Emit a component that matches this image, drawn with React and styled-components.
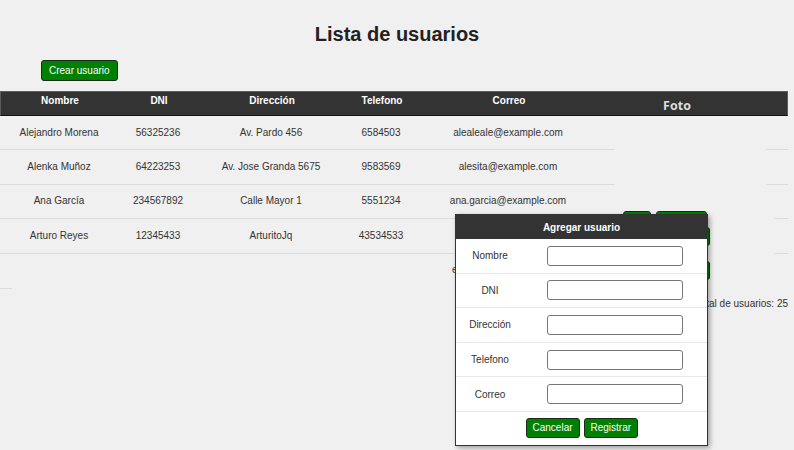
import React from "react";
import styled, { createGlobalStyle } from "styled-components";

const GlobalStyle = createGlobalStyle`
  body {
    margin: 0;
    background: #f0f0f0;
    font-family: "Liberation Sans", Arial, sans-serif;
    color: #333;
  }
`;

const Page = styled.div`
  position: relative;
  width: 794px;
  height: 450px;
  overflow: hidden;
`;

const Title = styled.h1`
  margin: 22px 0 0;
  font-size: 20px;
  line-height: 24px;
  font-weight: bold;
  text-align: center;
  color: #222;
`;

const Toolbar = styled.div`
  display: flex;
  padding: 14px 0 0 41px;
  margin-bottom: 10px;
`;

const GreenButton = styled.button`
  box-sizing: border-box;
  width: ${(p) => (p.$w ? `${p.$w}px` : "auto")};
  height: ${(p) => p.$h || 20}px;
  padding: 0 ${(p) => p.$pad || 6}px;
  background: #008000;
  color: #fff;
  border: 1px solid #1c2a1c;
  border-radius: 3px;
  font-family: "Liberation Sans", Arial, sans-serif;
  font-size: 10px;
  line-height: 12px;
  cursor: pointer;
  flex-shrink: 0;
`;

const Table = styled.div`
  width: 788px;
`;

const HeadRow = styled.div`
  box-sizing: border-box;
  display: grid;
  grid-template-columns: 118px 80px 146px 74px 180px 156px 1fr;
  height: 25px;
  background: #333;
  border: 1px solid #5c5c5c;
  border-bottom-color: #111;
  width: 788px;
`;

const HeadCell = styled.div`
  padding-top: 3px;
  text-align: center;
  color: #fff;
  font-size: 10px;
  line-height: 12px;
  font-weight: bold;
`;

const FotoHead = styled.div`
  padding-top: 6px;
  text-align: center;
  color: #ddd;
  font-family: "Open Sans", "Liberation Sans", sans-serif;
  font-size: 12.5px;
  line-height: 15px;
  font-weight: bold;
`;

const Row = styled.div`
  display: grid;
  grid-template-columns: 118px 80px 146px 74px 180px 17px 1fr ${(p) => p.$tail}px;
  grid-template-rows: 34.4px;
  height: 34.4px;
`;

const Cell = styled.div`
  box-sizing: border-box;
  display: flex;
  align-items: center;
  justify-content: center;
  font-size: 10px;
  line-height: 12px;
  color: #333;
  white-space: nowrap;
  border-bottom: 1px solid ${(p) => (p.$line ? "#dcdcdc" : "transparent")};
`;

const MailCell = styled(Cell)`
  justify-content: flex-start;
  padding-left: ${(p) => p.$indent || 0}px;
`;

const Actions = styled.div`
  box-sizing: border-box;
  display: flex;
  align-items: ${(p) => (p.$drop ? "flex-start" : "center")};
  gap: 5px;
  padding: ${(p) => (p.$drop ? "26px 0 0 8px" : "0 0 0 8px")};
  height: 34.4px;
  min-height: 0;
  overflow: visible;
`;

const Stub = styled.div`
  width: 12px;
  height: 1px;
  background: #dcdcdc;
`;

const Total = styled.div`
  width: 788px;
  margin-top: 9px;
  text-align: right;
  font-size: 10px;
  line-height: 12px;
  color: #333;
`;

const Modal = styled.div`
  position: absolute;
  left: 455px;
  top: 214px;
  width: 253px;
  box-sizing: border-box;
  background: #fff;
  border: 1px solid #333;
  box-shadow: 2px 2px 5px rgba(0, 0, 0, 0.35);
`;

const ModalHead = styled.div`
  height: 24px;
  display: flex;
  align-items: center;
  justify-content: center;
  background: #333;
  color: #fff;
  font-size: 10px;
  font-weight: bold;
`;

const Field = styled.div`
  box-sizing: border-box;
  display: grid;
  grid-template-columns: 68px 1fr;
  align-items: center;
  height: 34.6px;
  border-bottom: 1px solid #e6e6e6;
`;

const Label = styled.label`
  text-align: center;
  font-size: 10px;
  color: #333;
`;

const Input = styled.input`
  justify-self: center;
  box-sizing: border-box;
  width: 136px;
  height: 20px;
  margin-left: -2px;
  border: 1px solid #767676;
  border-radius: 3px;
  background: #fff;
`;

const ModalFooter = styled.div`
  height: 33px;
  display: flex;
  align-items: center;
  justify-content: center;
  gap: 4px;
`;

const users = [
  ["Alejandro Morena", "56325236", "Av. Pardo 456", "6584503", "alealeale@example.com"],
  ["Alenka Muñoz", "64223253", "Av. Jose Granda 5675", "9583569", "alesita@example.com"],
  ["Ana García", "234567892", "Calle Mayor 1", "5551234", "ana.garcia@example.com"],
  ["Arturo Reyes", "12345433", "ArturitoJq", "43534533", "arturo@example.com"],
];

const fields = ["Nombre", "DNI", "Dirección", "Telefono", "Correo"];

function ActionPair({ drop, last }) {
  return (
    <Actions $drop={drop}>
      <GreenButton $w={28} $h={20} $pad={2}>Editar</GreenButton>
      <GreenButton $w={last ? 51 : 54} $h={drop ? 20 : 19}>Eliminar</GreenButton>
    </Actions>
  );
}

export default function App() {
  return (
    <Page>
      <GlobalStyle />
      <Title>Lista de usuarios</Title>
      <Toolbar>
        <GreenButton $h={21} $pad={7}>Crear usuario</GreenButton>
      </Toolbar>

      <Table>
        <HeadRow>
          <HeadCell>Nombre</HeadCell>
          <HeadCell>DNI</HeadCell>
          <HeadCell>Dirección</HeadCell>
          <HeadCell>Telefono</HeadCell>
          <HeadCell>Correo</HeadCell>
          <FotoHead>Foto</FotoHead>
          <div />
        </HeadRow>

        {users.map((u, i) => (
          <Row key={u[0]} $tail={i < 2 ? 22 : 13}>
            {u.map((v) => (
              <Cell key={v} $line>{v}</Cell>
            ))}
            <Cell $line />
            {i === 2 ? <ActionPair drop last /> : i === 3 ? <ActionPair /> : <div />}
            <Cell $line />
          </Row>
        ))}

        <Row $tail={13}>
          <Cell />
          <Cell />
          <Cell />
          <Cell />
          <MailCell $indent={34}>estebanq@example.com</MailCell>
          <Cell />
          <ActionPair />
          <Cell />
        </Row>
        <Stub />
      </Table>

      <Total>Total de usuarios: 25</Total>

      <Modal>
        <ModalHead>Agregar usuario</ModalHead>
        {fields.map((f) => (
          <Field key={f}>
            <Label>{f}</Label>
            <Input type="text" />
          </Field>
        ))}
        <ModalFooter>
          <GreenButton $w={54} $h={20} $pad={0}>Cancelar</GreenButton>
          <GreenButton $w={54} $h={20} $pad={0}>Registrar</GreenButton>
        </ModalFooter>
      </Modal>
    </Page>
  );
}
